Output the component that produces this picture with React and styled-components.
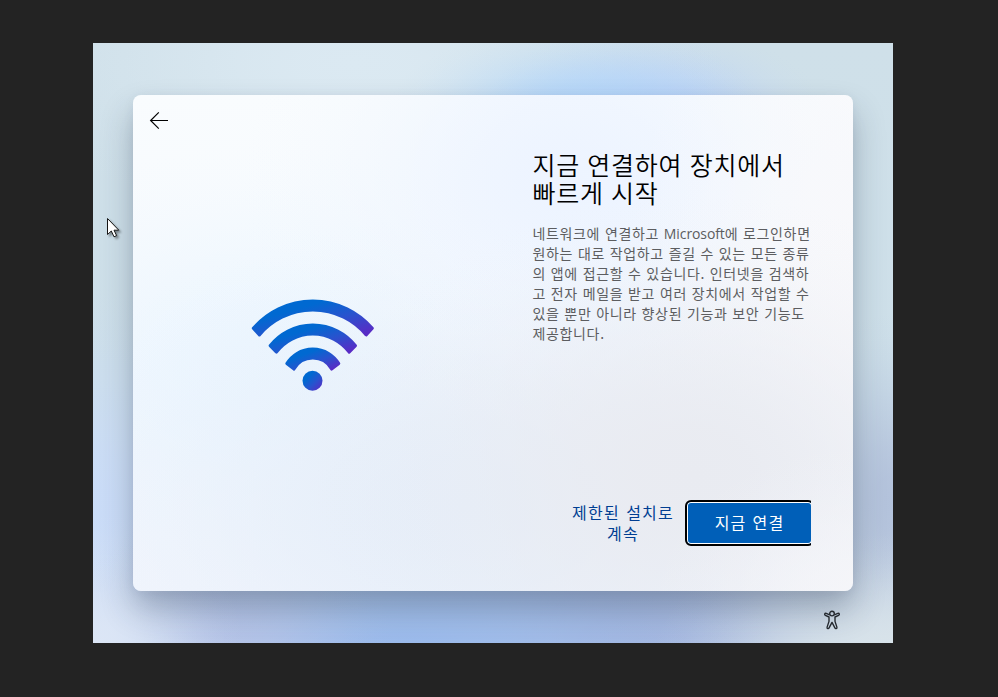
import React from "react";
import styled, { createGlobalStyle } from "styled-components";

const glow = (rx, ry, x, y, rgb, alpha = 1) => {
  const stops = [[0, 1], [15, 0.94], [30, 0.78], [45, 0.56], [60, 0.34], [75, 0.16], [88, 0.05], [100, 0]]
    .map(([at, strength]) => `rgba(${rgb}, ${(strength * alpha).toFixed(3)}) ${at}%`)
    .join(", ");
  return `radial-gradient(ellipse ${rx}px ${ry}px at ${x}px ${y}px, ${stops})`;
};

const wallpaper = [
  glow(190, 85, 485, 68, "178, 214, 250", 0.9),
  glow(170, 85, 560, 68, "182, 207, 250", 0.85),
  glow(150, 130, 0, 600, "220, 230, 246"),
  glow(240, 120, 800, 610, "216, 227, 234"),
  glow(170, 110, 130, 590, "180, 192, 230", 0.7),
  glow(380, 190, 310, 620, "154, 186, 236"),
  glow(130, 190, 800, 460, "174, 189, 217", 0.85),
  glow(350, 190, 540, 600, "166, 183, 222"),
  glow(200, 240, 0, 480, "202, 220, 248"),
  glow(380, 160, 260, 20, "219, 233, 242"),
  "linear-gradient(#cfe0e9, #cddfe9 60%, #d5e1e9)",
].join(", ");

const acrylic = [
  glow(230, 170, 740, 510, "246, 246, 249", 0.85),
  glow(380, 280, 560, 380, "233, 235, 241"),
  glow(260, 420, 740, 200, "248, 248, 251"),
  glow(330, 260, 440, 90, "237, 244, 255"),
  glow(460, 290, 330, 410, "230, 238, 249"),
  glow(330, 230, 130, 280, "233, 245, 255", 0.8),
  "linear-gradient(#f9fcfe, #f5f9fe 50%, #f1f5fd)",
].join(", ");

const GlobalStyle = createGlobalStyle`
  * { box-sizing: border-box; }
  body { margin: 0; background: #232323; overflow: hidden; }
  button { font: inherit; border: 0; padding: 0; background: none; }
`;

const Page = styled.main`
  width: 998px;
  height: 697px;
  padding: 43px 93px;
  background: #232323;
  font-family: "Noto Sans CJK KR", "Open Sans", sans-serif;
`;

const Desktop = styled.section`
  position: relative;
  display: flex;
  flex-direction: column;
  width: 800px;
  height: 600px;
  padding: 52px 40px 0;
  overflow: hidden;
  background: ${wallpaper};
`;

const Card = styled.article`
  display: grid;
  grid-template-columns: 360px 1fr;
  flex: none;
  width: 720px;
  height: 496px;
  border-radius: 8px;
  background: ${acrylic};
  box-shadow: 0 18px 32px rgba(30, 45, 70, 0.3), 0 2px 12px rgba(30, 45, 70, 0.05);
`;

const VisualPane = styled.div`
  display: flex;
  flex-direction: column;
`;

const BackButton = styled.button`
  display: flex;
  width: 20px;
  height: 20px;
  margin: 15px 0 0 16px;
`;

const WifiIcon = styled.svg`
  display: block;
  width: 126px;
  height: 94px;
  margin: 168px 0 0 117px;
`;

const ContentPane = styled.div`
  display: flex;
  flex-direction: column;
  padding: 55px 42px 0 39.5px;
`;

const Title = styled.h1`
  margin: 0;
  color: #000;
  font-size: 25px;
  font-weight: 350;
  line-height: 28px;
  letter-spacing: 0.75px;
  word-spacing: 1px;
  white-space: nowrap;
`;

const Description = styled.p`
  margin: 17px 0 0;
  color: #5c5d60;
  font-size: 14px;
  font-weight: 400;
  line-height: 20px;
  letter-spacing: 0.65px;
  word-spacing: 1px;
  white-space: nowrap;
`;

const Line = styled.span`
  display: block;
  width: max-content;
`;

const Latin = styled.span`
  font-family: "Open Sans", sans-serif;
  font-size: 14px;
  line-height: 0;
  letter-spacing: -0.1px;
`;

const Actions = styled.div`
  display: flex;
  align-items: center;
  justify-content: flex-end;
  gap: 9px;
  height: 46px;
  margin-top: 157px;
`;

const LimitedButton = styled.button`
  width: 106px;
  color: #003e92;
  font-size: 16px;
  line-height: 21px;
  letter-spacing: 1.2px;
  word-spacing: 1.5px;
  text-align: center;
  white-space: nowrap;
`;

const FocusClip = styled.div`
  width: 126px;
  height: 46px;
  flex: none;
  overflow: hidden;
`;

const ConnectButton = styled.button`
  width: 129px;
  height: 46px;
  padding-bottom: 2px;
  border: 2px solid #000;
  border-radius: 6px;
  background: #005fb8;
  box-shadow: inset 0 0 0 1px #fff;
  color: #fff;
  font-size: 16px;
  letter-spacing: 1.2px;
  word-spacing: 1.2px;
`;

const AccessibilityButton = styled.button`
  display: flex;
  width: 20px;
  height: 20px;
  margin: 19px 11px 0 auto;
`;

const Cursor = styled.svg`
  position: absolute;
  left: 13px;
  top: 174px;
  width: 18px;
  height: 24px;
  filter: drop-shadow(2px 2px 1px rgba(0, 0, 0, 0.4));
`;

const arc = (outer, inner, outerDegrees, innerDegrees) => {
  const cx = 62.8;
  const cy = 81.5;
  const point = (r, degrees) => {
    const a = (degrees * Math.PI) / 180;
    return `${cx + r * Math.sin(a)} ${cy - r * Math.cos(a)}`;
  };
  return [
    `M${point(outer, -outerDegrees)}`,
    `A${outer} ${outer} 0 0 1 ${point(outer, outerDegrees)}`,
    `L${point(inner, innerDegrees)}`,
    `A${inner} ${inner} 0 0 0 ${point(inner, -innerDegrees)}Z`,
  ].join("");
};

const bands = [
  [78.5, 69.5, 49.3, 50.2],
  [54.5, 45.5, 51.6, 53],
  [30.5, 21.5, 58.5, 61],
];

export default function App() {
  return (
    <Page>
      <GlobalStyle />
      <Desktop>
        <Card>
          <VisualPane>
            <BackButton aria-label="뒤로">
              <svg width="20" height="20" viewBox="0 0 20 20" fill="none" stroke="#000" strokeWidth="1.2">
                <path d="M19 10.5H1.8M9.8 2.3 1.6 10.5l8.2 8.2" />
              </svg>
            </BackButton>
            <WifiIcon viewBox="0 0 126 94">
              <defs>
                <linearGradient id="signal" x1="0" y1="0" x2="1" y2="1">
                  <stop offset="0.3" stopColor="#0069d1" />
                  <stop offset="0.6" stopColor="#2853ce" />
                  <stop offset="0.95" stopColor="#592bc5" />
                </linearGradient>
              </defs>
              {bands.map(([outer, inner, outerAngle, innerAngle]) => (
                <path
                  key={outer}
                  d={arc(outer, inner, outerAngle, innerAngle)}
                  fill="url(#signal)"
                  stroke="url(#signal)"
                  strokeWidth="3"
                  strokeLinejoin="round"
                />
              ))}
              <circle cx="62.5" cy="82.7" r="10" fill="url(#signal)" />
            </WifiIcon>
          </VisualPane>
          <ContentPane>
            <Title>
              <Line>지금 연결하여 장치에서</Line>
              <Line>빠르게 시작</Line>
            </Title>
            <Description>
              <Line>네트워크에 연결하고 <Latin>Microsoft</Latin>에 로그인하면</Line>
              <Line>원하는 대로 작업하고 즐길 수 있는 모든 종류</Line>
              <Line>의 앱에 접근할 수 있습니다. 인터넷을 검색하</Line>
              <Line>고 전자 메일을 받고 여러 장치에서 작업할 수</Line>
              <Line>있을 뿐만 아니라 향상된 기능과 보안 기능도</Line>
              <Line>제공합니다.</Line>
            </Description>
            <Actions>
              <LimitedButton>제한된 설치로<br />계속</LimitedButton>
              <FocusClip>
                <ConnectButton>지금 연결</ConnectButton>
              </FocusClip>
            </Actions>
          </ContentPane>
        </Card>
        <AccessibilityButton aria-label="접근성">
          <svg width="20" height="20" viewBox="0 0 20 20" fill="none" stroke="#252a30" strokeWidth="1.4" strokeLinejoin="round">
            <circle cx="10" cy="3.6" r="2.3" />
            <path d="M7.7 4.8 4.2 3.4c-1.5-.5-2.2 1.3-.8 1.9L7 7v4.4l-1.9 5.7c-.4 1.6 1.5 2.1 2 .7L10 12.4l2.9 5.4c.5 1.4 2.4.9 2-.7L13 11.4V7l3.6-1.7c1.4-.6.7-2.4-.8-1.9l-3.5 1.4" />
          </svg>
        </AccessibilityButton>
        <Cursor viewBox="0 0 18 24">
          <path d="M1.5 1.5v16l3.8-3.5 2.7 5.8 2.6-1.2-2.6-5.4h4.8Z" fill="#fff" stroke="#151515" />
        </Cursor>
      </Desktop>
    </Page>
  );
}
